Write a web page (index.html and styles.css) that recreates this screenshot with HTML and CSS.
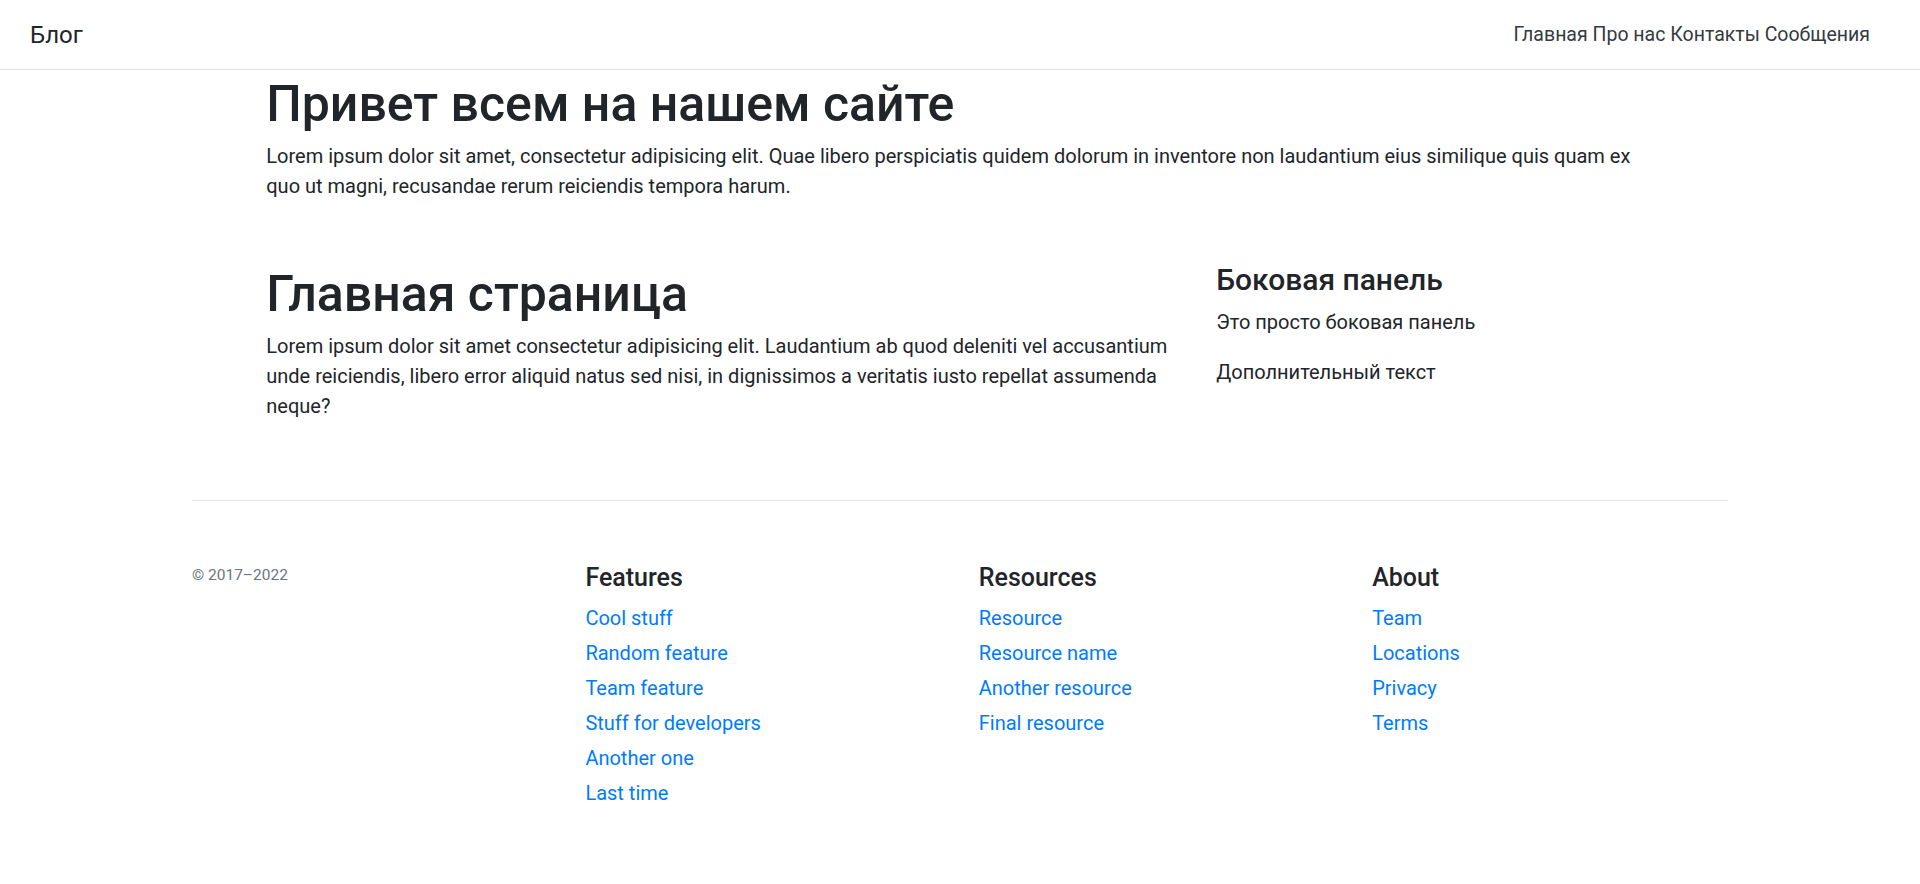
FILE: index.html
```html
<!DOCTYPE html>
<html lang="ru">
<head>
<meta charset="utf-8">
<title>Блог</title>
<link rel="stylesheet" href="styles.css">
</head>
<body>
<header class="site-header">
  <h5 class="brand">Блог</h5>
  <nav class="main-nav">
    <a class="nav-link" href="#">Главная</a>
    <a class="nav-link" href="#">Про нас</a>
    <a class="nav-link" href="#">Контакты</a>
    <a class="nav-link" href="#">Сообщения</a>
  </nav>
</header>

<div class="container">
  <section class="intro">
    <h1 class="title">Привет всем на нашем сайте</h1>
    <p class="text">Lorem ipsum dolor sit amet, consectetur adipisicing elit. Quae libero perspiciatis quidem dolorum in inventore non laudantium eius similique quis quam ex quo ut magni, recusandae rerum reiciendis tempora harum.</p>
  </section>

  <div class="content-row">
    <main class="main-col">
      <h1 class="title">Главная страница</h1>
      <p class="text text-last">Lorem ipsum dolor sit amet consectetur adipisicing elit. Laudantium ab quod deleniti vel accusantium unde reiciendis, libero error aliquid natus sed nisi, in dignissimos a veritatis iusto repellat assumenda neque?</p>
    </main>
    <aside class="side-col">
      <h4 class="side-title">Боковая панель</h4>
      <p class="side-text">Это просто боковая панель</p>
      <p class="side-text">Дополнительный текст</p>
    </aside>
  </div>
</div>

<footer class="site-footer">
  <div class="footer-row">
    <div class="footer-col">
      <small class="copyright">© 2017–2022</small>
    </div>
    <div class="footer-col">
      <h5 class="footer-title">Features</h5>
      <ul class="footer-list">
        <li><a href="#">Cool stuff</a></li>
        <li><a href="#">Random feature</a></li>
        <li><a href="#">Team feature</a></li>
        <li><a href="#">Stuff for developers</a></li>
        <li><a href="#">Another one</a></li>
        <li><a href="#">Last time</a></li>
      </ul>
    </div>
    <div class="footer-col">
      <h5 class="footer-title">Resources</h5>
      <ul class="footer-list">
        <li><a href="#">Resource</a></li>
        <li><a href="#">Resource name</a></li>
        <li><a href="#">Another resource</a></li>
        <li><a href="#">Final resource</a></li>
      </ul>
    </div>
    <div class="footer-col">
      <h5 class="footer-title">About</h5>
      <ul class="footer-list">
        <li><a href="#">Team</a></li>
        <li><a href="#">Locations</a></li>
        <li><a href="#">Privacy</a></li>
        <li><a href="#">Terms</a></li>
      </ul>
    </div>
  </div>
</footer>
</body>
</html>
```
FILE: styles.css
```css
* { box-sizing: border-box; }

html, body {
  margin: 0;
  padding: 0;
  background: #fff;
}

body {
  font-family: Roboto, "Liberation Sans", Arial, sans-serif;
  font-size: 20px;
  line-height: 30px;
  color: #212529;
}

a { text-decoration: none; }

/* Header */
.site-header {
  display: flex;
  align-items: center;
  padding: 20px 30px 19px 30px;
  border-bottom: 1px solid #dee2e6;
  background: #fff;
}

.brand {
  margin: 0 auto 0 0;
  font-size: 24px;
  line-height: 30px;
  font-weight: 400;
  color: #212529;
}

.main-nav {
  margin-right: 20px;
  font-size: 19.5px;
  line-height: 30px;
}

.nav-link {
  color: #343a40;
}

/* Main container */
.container {
  max-width: 1425px;
  margin: 0 auto;
  padding: 0 18.75px;
}

.title {
  margin: 0 0 7px 0;
  padding-top: 4px;
  font-size: 50px;
  line-height: 60px;
  font-weight: 500;
  color: #212529;
}

.text {
  margin: 0;
}

.text-last {
  margin-bottom: 20px;
}

.content-row {
  display: flex;
  margin: 59px -18.75px 0;
}

.main-col {
  flex: 0 0 66.6667%;
  max-width: 66.6667%;
  padding: 0 18.75px;
}

.side-col {
  flex: 0 0 33.3333%;
  max-width: 33.3333%;
  padding: 0 18.75px;
}

.side-title {
  margin: 0 0 9px 0;
  padding-top: 2px;
  font-size: 30px;
  line-height: 36px;
  font-weight: 500;
  color: #212529;
}

.side-text {
  margin: 0 0 20px 0;
}

/* Footer */
.site-footer {
  width: 1536px;
  margin: 59px auto 40px;
  padding-top: 60px;
  border-top: 1px solid #e5e5e5;
}

.footer-row {
  display: grid;
  grid-template-columns: repeat(4, 1fr);
  margin: 0 -18.75px;
}

.footer-col {
  padding: 0 18.75px;
}

.copyright {
  display: block;
  padding-top: 1.5px;
  font-size: 15.5px;
  line-height: 24px;
  color: #6c757d;
}

.footer-title {
  margin: 0 0 10px 0;
  padding-top: 2px;
  font-size: 25px;
  line-height: 30px;
  font-weight: 500;
  color: #212529;
}

.footer-list {
  list-style: none;
  margin: 0;
  padding: 0;
}

.footer-list li {
  margin-bottom: 5px;
}

.footer-list a {
  color: #007bff;
}
```
